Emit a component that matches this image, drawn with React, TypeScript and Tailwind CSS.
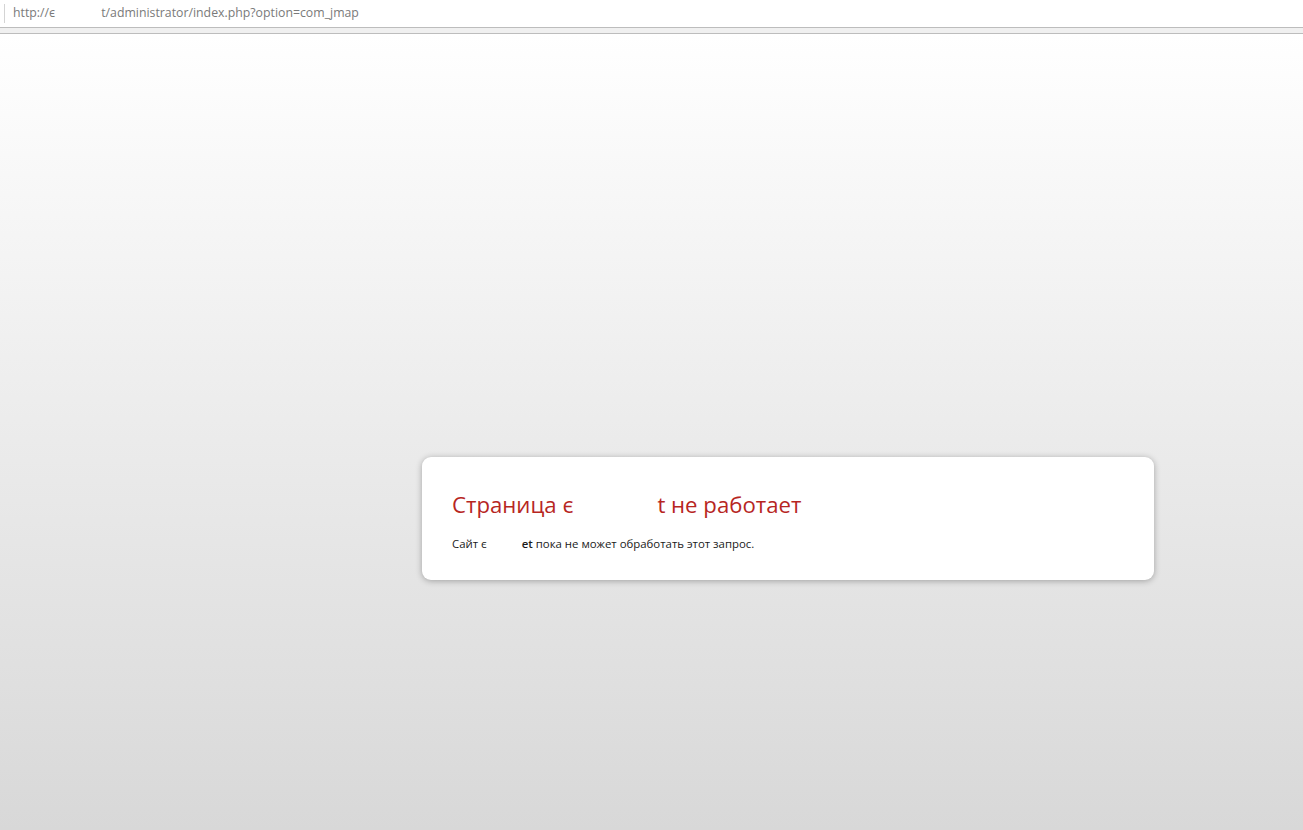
import React from "react";

export default function App() {
  return (
    <div className="w-[1303px] h-[830px] flex flex-col overflow-hidden" style={{ fontFamily: '"Open Sans", "Noto Sans", sans-serif' }}>
      <div className="h-[27px] bg-white flex items-center shrink-0">
        <div className="ml-[4px] w-px h-[19px] bg-[#d4d4d4]" />
        <div className="ml-[8px] text-[12.3px] text-[#7a7a7a] leading-none flex items-center" style={{ fontFamily: '"Open Sans", sans-serif' }}>
          <span>http://є</span>
          <span className="inline-block w-[46px]" />
          <span>t/administrator/index.php?option=com_jmap</span>
        </div>
      </div>
      <div className="h-px bg-[#bdbdbd] shrink-0" />
      <div className="h-[5px] bg-[#f0f0f0] shrink-0" />
      <div className="h-px bg-[#bdbdbd] shrink-0" />
      <div className="flex-1 bg-gradient-to-b from-[#ffffff] to-[#d8d8d8] flex flex-col">
        <div className="h-[423px]" />
        <div className="ml-[422px] w-[732px] h-[123px] bg-white rounded-[9px] shadow-[0_1px_6px_rgba(0,0,0,0.3)] pl-[30px] pt-[33px]">
          <div className="text-[22.2px] leading-[30px] text-[#b7261f] flex" style={{ fontFamily: '"Open Sans", "Noto Sans", sans-serif' }}>
            <span>Страница є</span>
            <span className="inline-block w-[84px]" />
            <span>t не работает</span>
          </div>
          <div className="mt-[16px] text-[11.4px] leading-[15px] text-[#1a1a1a] flex" style={{ fontFamily: '"Open Sans", "Noto Sans", sans-serif' }}>
            <span>Сайт є</span>
            <span className="inline-block w-[35px]" />
            <span><b className="font-semibold">et</b> пока не может обработать этот запрос.</span>
          </div>
        </div>
      </div>
    </div>
  );
}
